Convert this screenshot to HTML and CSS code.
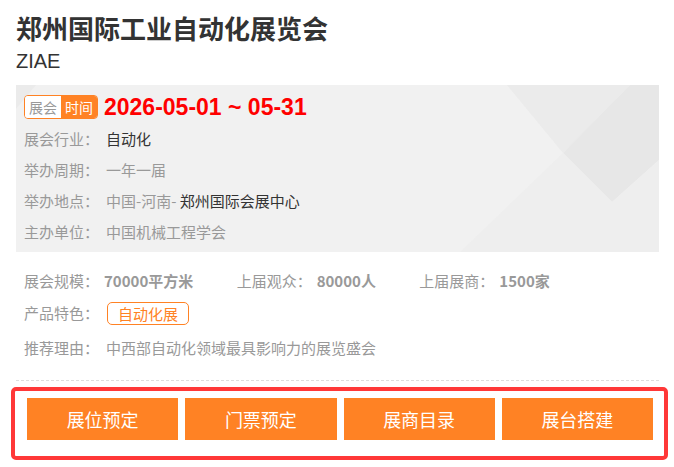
FILE: index.html
```html
<!DOCTYPE html>
<html lang="zh-CN">

<head>
    <meta charset="UTF-8">
    <meta name="viewport" content="width=device-width, initial-scale=1.0">
    <title>郑州国际工业自动化展览会</title>
    <link rel="stylesheet" href="styles.css">
</head>

<body>

    <div class="expo">
        <h1 class="expo-title">郑州国际工业自动化展览会</h1>
        <div class="expo-abbr">ZIAE</div>

        <div class="expo-main">
            <div class="date-row">
                <span class="date-tag"><span class="tag-a">展会</span><span class="tag-b">时间</span></span>
                <span class="date">2026-05-01 ~ 05-31</span>
            </div>
            <div class="row first"><span class="label">展会行业：</span><span class="dark">自动化</span></div>
            <div class="row"><span class="label">举办周期：</span><span>一年一届</span></div>
            <div class="row"><span class="label">举办地点：</span><span>中国-河南- </span><span class="dark">郑州国际会展中心</span></div>
            <div class="row"><span class="label">主办单位：</span><span>中国机械工程学会</span></div>
        </div>

        <div class="expo-extra">
            <div class="row stats">
                <span class="stat"><span class="stat-label">展会规模：</span><b>70000平方米</b></span>
                <span class="stat"><span class="stat-label">上届观众：</span><b>80000人</b></span>
                <span class="stat"><span class="stat-label">上届展商：</span><b>1500家</b></span>
            </div>
            <div class="row feature"><span class="label">产品特色：</span><span class="feature-tag">自动化展</span></div>
            <div class="row reason"><span class="label">推荐理由：</span><span>中西部自动化领域最具影响力的展览盛会</span></div>
        </div>

        <div class="actions">
            <button>展位预定</button>
            <button>门票预定</button>
            <button>展商目录</button>
            <button>展台搭建</button>
        </div>
    </div>

</body>

</html>
```

FILE: styles.css
```css
body {
    margin: 0;
    padding: 0;
    background-color: #fff;
    font-family: "Microsoft YaHei", "Noto Sans CJK SC", sans-serif;
    color: #999;
}

.expo {
    padding: 10px 15px 0 16px;
}

.expo-title {
    margin: 0;
    font-size: 26px;
    line-height: 36px;
    font-weight: bold;
    color: #333;
}

.expo-abbr {
    margin-top: 3px;
    font-family: "Liberation Sans", Arial, sans-serif;
    font-size: 20px;
    line-height: 24px;
    color: #333;
}

.expo-main {
    margin-top: 12px;
    padding: 10px 8px 5px;
    height: 152px;
    background-color: #f1f1f1;
    background-image: url("data:image/svg+xml,%3Csvg xmlns='http://www.w3.org/2000/svg' viewBox='0 0 643 167' preserveAspectRatio='none'%3E%3Cpolygon points='0,0 20,0 0,24' fill='%23ebebeb'/%3E%3Cpolygon points='491,0 614,0 547,68' fill='%23ebebeb'/%3E%3Cpolygon points='547,68 614,0 643,0 643,75 596,117' fill='%23e7e7e7'/%3E%3Cpolygon points='547,68 596,117 643,75 643,167 444,167' fill='%23eeeeee'/%3E%3C/svg%3E");
    background-size: 100% 100%;
}

.date-row {
    display: flex;
    align-items: center;
    height: 24px;
}

.date-tag {
    display: flex;
    border: 1px solid #ff8224;
    border-radius: 4px;
    overflow: hidden;
    font-size: 14px;
    line-height: 22px;
}

.tag-a {
    padding: 0 4px;
    background-color: #fff;
    color: #999;
}

.tag-b {
    padding: 0 4px;
    background-color: #ff8224;
    color: #fff;
}

.date {
    margin-left: 6px;
    font-family: "Liberation Sans", Arial, sans-serif;
    font-size: 23px;
    font-weight: bold;
    color: #f00;
}

.row {
    font-size: 15px;
    line-height: 31px;
    white-space: nowrap;
}

.row.first {
    margin-top: 4px;
}

.label {
    display: inline-block;
    width: 82px;
}

.dark {
    color: #333;
}

.expo-extra {
    padding: 13px 8px 16px;
    border-bottom: 1px dashed #ddd;
}

.expo-extra .row {
    line-height: 32px;
}

.stat {
    margin-right: 40px;
}

.stat b {
    margin-left: 5px;
}

.feature {
    display: flex;
    align-items: center;
    height: 32px;
}

.feature-tag {
    margin-left: 1px;
    padding: 0 10px;
    border: 1px solid #ff8224;
    border-radius: 5px;
    line-height: 21px;
    color: #ff8224;
}

.reason {
    margin-top: 3px;
}

.actions {
    display: flex;
    gap: 7px;
    margin: 6px -9px 0 -5px;
    padding: 7px 11px 16px 12px;
    border: 4px solid #ff3838;
    border-radius: 5px;
}

.actions button {
    flex: 1;
    height: 42px;
    border: none;
    background-color: #ff8224;
    color: #fff;
    font-family: "Microsoft YaHei", "Noto Sans CJK SC", sans-serif;
    font-size: 18px;
    cursor: pointer;
}

.actions button:hover {
    background-color: #f07318;
}
```
